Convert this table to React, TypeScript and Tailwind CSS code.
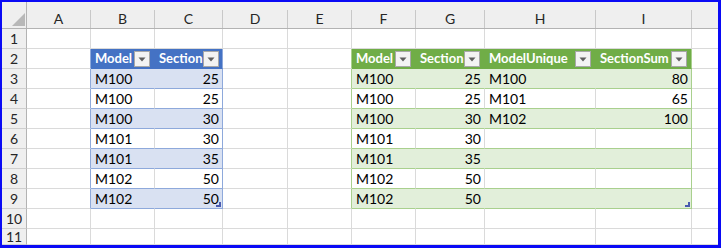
import React from "react";

const COLS = ["A", "B", "C", "D", "E", "F", "G", "H", "I"];
const ROWS = [1, 2, 3, 4, 5, 6, 7, 8, 9, 10, 11];

const DATA: Record<string, string> = {
  B2: "Model", C2: "Section",
  F2: "Model", G2: "Section", H2: "ModelUnique", I2: "SectionSum",
  B3: "M100", C3: "25", B4: "M100", C4: "25", B5: "M100", C5: "30",
  B6: "M101", C6: "30", B7: "M101", C7: "35", B8: "M102", C8: "50", B9: "M102", C9: "50",
  F3: "M100", G3: "25", F4: "M100", G4: "25", F5: "M100", G5: "30",
  F6: "M101", G6: "30", F7: "M101", G7: "35", F8: "M102", G8: "50", F9: "M102", G9: "50",
  H3: "M100", I3: "80", H4: "M101", I4: "65", H5: "M102", I5: "100",
};

const NUMERIC = new Set(["C", "G", "I"]);

function FilterButton() {
  return (
    <span className="ml-auto mr-[1px] flex h-[16px] w-[16px] shrink-0 items-center justify-center border border-[#a8a8a8] bg-[#f3f3f3]">
      <svg width="8" height="5" viewBox="0 0 8 5">
        <path d="M0.5 0.5 H7.5 L4 4.5 Z" fill="#5f5f5f" />
      </svg>
    </span>
  );
}

function ResizeMark() {
  return (
    <svg className="absolute bottom-[1px] right-[1px]" width="5" height="5" viewBox="0 0 5 5">
      <path d="M5 0 V5 H0 V3 H3 V0 Z" fill="#4a5bb0" />
    </svg>
  );
}

function cellClasses(col: string, row: number) {
  const inBlue = (col === "B" || col === "C") && row >= 2 && row <= 9;
  const inGreen = ["F", "G", "H", "I"].includes(col) && row >= 2 && row <= 9;
  const band = row % 2 === 1;

  if (inBlue) {
    if (row === 2) {
      return col === "C"
        ? "bg-[#4472c4] border-r-[#8ea9db] border-b-[#4472c4] text-white font-bold text-[13px]"
        : "bg-[#4472c4] border-r-[#4472c4] border-b-[#4472c4] text-white font-bold text-[13px]";
    }
    if (col === "C") return band ? "bg-[#d9e1f2] border-r-[#8ea9db] border-b-[#8ea9db]" : "bg-white border-r-[#8ea9db] border-b-[#8ea9db]";
    return band ? "bg-[#d9e1f2] border-r-[#d9e1f2] border-b-[#8ea9db]" : "bg-white border-r-[#dadada] border-b-[#8ea9db]";
  }
  if (inGreen) {
    if (row === 2) {
      return col === "I"
        ? "bg-[#70ad47] border-r-[#a9d08e] border-b-[#70ad47] text-white font-bold text-[13px]"
        : "bg-[#70ad47] border-r-[#70ad47] border-b-[#70ad47] text-white font-bold text-[13px]";
    }
    if (col === "I") return band ? "bg-[#e2efda] border-r-[#a9d08e] border-b-[#a9d08e]" : "bg-white border-r-[#a9d08e] border-b-[#a9d08e]";
    return band ? "bg-[#e2efda] border-r-[#e2efda] border-b-[#a9d08e]" : "bg-white border-r-[#dadada] border-b-[#a9d08e]";
  }
  if (col === "A" && row >= 2 && row <= 9) return "bg-white border-r-[#8ea9db] border-b-[#dadada]";
  if (col === "E" && row >= 2 && row <= 9) return "bg-white border-r-[#a9d08e] border-b-[#dadada]";
  return "bg-white border-r-[#dadada] border-b-[#dadada]";
}

function Cell({ col, row }: { col: string; row: number }) {
  const key = `${col}${row}`;
  const value = DATA[key];
  const isHeader = row === 2 && value !== undefined;
  const right = !isHeader && NUMERIC.has(col);
  return (
    <div
      className={`relative flex items-center overflow-hidden whitespace-nowrap border-r border-b pl-[4px] pr-[3px] pt-[1px] text-black ${cellClasses(col, row)} ${right ? "justify-end" : ""}`}
    >
      {value !== undefined && <span className={isHeader ? "pb-[1px]" : ""}>{value}</span>}
      {isHeader && <FilterButton />}
      {(key === "C9" || key === "I9") && <ResizeMark />}
    </div>
  );
}

export default function App() {
  return (
    <div className="h-[248px] w-[721px] overflow-hidden border-t-2 border-l-2 border-r-[3px] border-b-[3px] border-[#0a0af5] bg-white font-['Lato','Liberation_Sans',sans-serif] text-[14px] leading-none">
      <div className="grid h-full grid-cols-[25px_64px_64px_68px_65px_64px_64px_69px_111px_96px_1fr] grid-rows-[27px_repeat(10,20px)_1fr]">
        {/* corner */}
        <div className="relative border-r border-b border-r-[#b3b3b3] border-b-[#b3b3b3] bg-[#efefef]">
          <svg className="absolute left-[10px] top-[11px]" width="13" height="13" viewBox="0 0 13 13">
            <path d="M13 0 V13 H0 Z" fill="#b8b8b8" />
          </svg>
        </div>
        {COLS.map((c) => (
          <div key={c} className="flex flex-col border-b border-b-[#b3b3b3] bg-[#efefef]">
            <div className="h-[8px]" />
            <div className="flex flex-1 items-center justify-center border-r border-r-[#c8c8c8] pb-[1px] text-[#262626]">
              {c}
            </div>
          </div>
        ))}
        <div className="border-b border-b-[#b3b3b3] bg-[#efefef]" />

        {ROWS.map((r) => (
          <React.Fragment key={r}>
            <div className="flex items-center justify-center border-r border-b border-r-[#b3b3b3] border-b-[#cfcfcf] bg-[#efefef] pt-[1px] text-[#262626]">
              {r}
            </div>
            {COLS.map((c) => (
              <Cell key={c} col={c} row={r} />
            ))}
            <div className="border-b border-b-[#dadada] bg-white" />
          </React.Fragment>
        ))}
      </div>
    </div>
  );
}
